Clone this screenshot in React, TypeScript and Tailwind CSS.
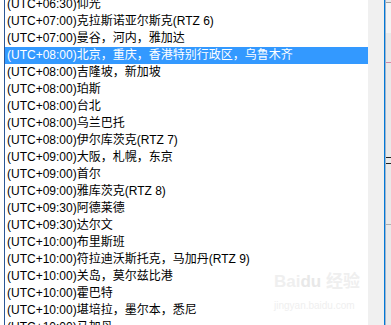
import React from "react";

const rows = [
  "(UTC+06:30)仰光",
  "(UTC+07:00)克拉斯诺亚尔斯克(RTZ 6)",
  "(UTC+07:00)曼谷，河内，雅加达",
  "(UTC+08:00)北京，重庆，香港特别行政区，乌鲁木齐",
  "(UTC+08:00)吉隆坡，新加坡",
  "(UTC+08:00)珀斯",
  "(UTC+08:00)台北",
  "(UTC+08:00)乌兰巴托",
  "(UTC+08:00)伊尔库茨克(RTZ 7)",
  "(UTC+09:00)大阪，札幌，东京",
  "(UTC+09:00)首尔",
  "(UTC+09:00)雅库茨克(RTZ 8)",
  "(UTC+09:30)阿德莱德",
  "(UTC+09:30)达尔文",
  "(UTC+10:00)布里斯班",
  "(UTC+10:00)符拉迪沃斯托克，马加丹(RTZ 9)",
  "(UTC+10:00)关岛，莫尔兹比港",
  "(UTC+10:00)霍巴特",
  "(UTC+10:00)堪培拉，墨尔本，悉尼",
  "(UTC+10:00)马加丹",
];

export default function App() {
  return (
    <div
      className="relative flex h-[325px] w-[391px] overflow-hidden bg-white"
      style={{ fontFamily: '"Liberation Sans", "Noto Sans CJK SC", sans-serif' }}
    >
      <div className="w-[4px] shrink-0 bg-white" />
      <div className="w-[1px] shrink-0 bg-[#2b5797]" />
      <div className="flex w-[363px] shrink-0 flex-col overflow-hidden">
        <div className="-mt-[4px] flex flex-col">
          {rows.map((r, i) => (
            <div
              key={i}
              className={
                i === 3
                  ? "h-[17px] whitespace-nowrap bg-[#3399ff] pl-[2px] text-[12px] leading-[17px] text-white"
                  : "h-[17px] whitespace-nowrap pl-[2px] text-[12px] leading-[17px] text-black"
              }
            >
              {r}
            </div>
          ))}
        </div>
      </div>
      <div className="w-[16px] shrink-0 bg-[#f0f0f0]" />
      <div className="w-[1px] shrink-0 bg-[#0078d7]" />
      <div className="w-[1px] shrink-0 bg-[#9fb4cc]" />
      <div className="flex flex-1 flex-col bg-[#e9e9e9]">
        <div className="mt-[2px] h-[1px] bg-[#a0a0a0]" />
        <div className="h-[30px] bg-[#f4f4f4]" />
        <div className="mt-[29px] h-[1px] bg-[#d08aa8]" />
        <div className="mt-[94px] h-[1px] bg-[#222]" />
        <div className="mt-[5px] h-[1px] bg-[#222]" />
        <div className="mt-[60px] h-[1px] bg-[#b0b0b0]" />
      </div>
      <div className="pointer-events-none absolute left-[274px] top-[272px] flex flex-col items-start">
        <div className="whitespace-nowrap text-[17px] font-bold leading-[20px] text-[#efefef]">
          Bai<span className="text-[#e8e8e8]">du</span> 经验
        </div>
        <div className="mt-[8px] whitespace-nowrap text-[10px] leading-[12px] text-[#efefef]">
          jingyan.baidu.com
        </div>
      </div>
    </div>
  );
}
